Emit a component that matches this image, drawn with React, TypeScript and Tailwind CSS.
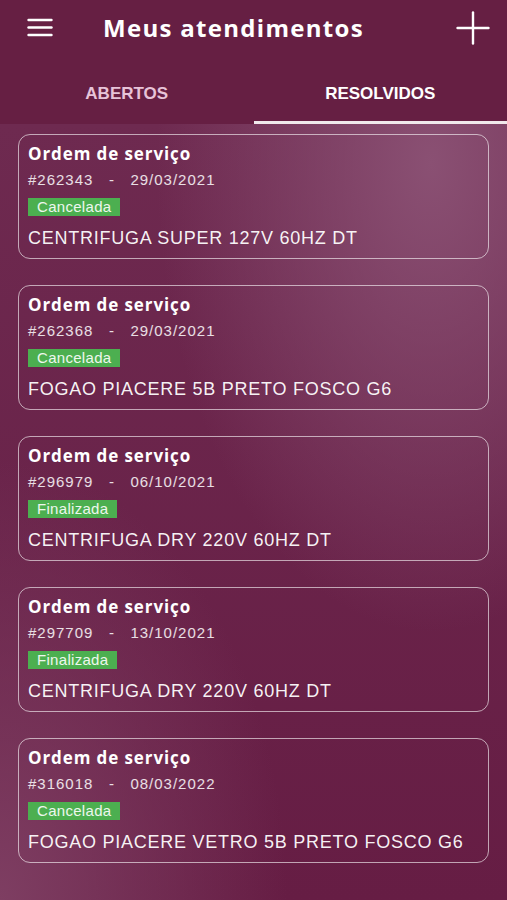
type Order = {
  id: string;
  date: string;
  status: 'Cancelada' | 'Finalizada';
  product: string;
};

const orders: Order[] = [
  { id: '262343', date: '29/03/2021', status: 'Cancelada', product: 'CENTRIFUGA SUPER 127V 60HZ DT' },
  { id: '262368', date: '29/03/2021', status: 'Cancelada', product: 'FOGAO PIACERE 5B PRETO FOSCO G6' },
  { id: '296979', date: '06/10/2021', status: 'Finalizada', product: 'CENTRIFUGA DRY 220V 60HZ DT' },
  { id: '297709', date: '13/10/2021', status: 'Finalizada', product: 'CENTRIFUGA DRY 220V 60HZ DT' },
  { id: '316018', date: '08/03/2022', status: 'Cancelada', product: 'FOGAO PIACERE VETRO 5B PRETO FOSCO G6' },
];

const OrderCard = ({ order }: { order: Order }) => (
  <div className="h-[125px] rounded-[12px] border-[1.5px] border-white/60 px-[9px] pt-[7px]">
    <h3 className="font-['Open_Sans',sans-serif] text-[17px] font-bold leading-[24px] tracking-[0.9px] text-white">
      Ordem de serviço
    </h3>
    <p className="mt-[4px] whitespace-pre font-['Liberation_Sans',Arial,sans-serif] text-[15px] leading-[20px] tracking-[1px] text-white/85">
      #{order.id}   -   {order.date}
    </p>
    <div className="mt-[8px] w-fit bg-[#4caf50] px-[9px] font-['Liberation_Sans',Arial,sans-serif] text-[15px] leading-[18px] tracking-[0.3px] text-white/90">
      {order.status}
    </div>
    <p className="mt-[11px] font-['Liberation_Sans',Arial,sans-serif] text-[18px] leading-[22px] tracking-[0.75px] text-white/95">
      {order.product}
    </p>
  </div>
);

export default function App() {
  return (
    <div className="flex h-[900px] w-[507px] flex-col overflow-hidden bg-[#681f45]">
      <header className="flex h-[56px] shrink-0 items-center bg-[#661f43] pl-[27px] pr-[17px]">
        <svg width="26" height="20" viewBox="0 0 26 20" className="text-white">
          <g stroke="currentColor" strokeWidth="2.4" strokeLinecap="round">
            <line x1="1.5" y1="2" x2="24.5" y2="2" />
            <line x1="1.5" y1="9.5" x2="24.5" y2="9.5" />
            <line x1="1.5" y1="17" x2="24.5" y2="17" />
          </g>
        </svg>
        <h1 className="ml-[50px] flex-1 font-['Open_Sans',sans-serif] text-[24px] font-bold tracking-[1.3px] text-white">
          Meus atendimentos
        </h1>
        <svg width="34" height="34" viewBox="0 0 34 34" className="text-white">
          <g stroke="currentColor" strokeWidth="2.4" strokeLinecap="round">
            <line x1="17" y1="1.5" x2="17" y2="32.5" />
            <line x1="1.5" y1="17" x2="32.5" y2="17" />
          </g>
        </svg>
      </header>

      <nav className="flex h-[68px] shrink-0 bg-[#661f43] font-['Liberation_Sans',Arial,sans-serif] text-[17px] font-semibold">
        <div className="flex flex-1 items-center justify-center pt-[7px] text-[#e7c3d8]">ABERTOS</div>
        <div className="flex flex-1 items-center justify-center border-b-[3px] border-white/90 pt-[10px] text-white">
          RESOLVIDOS
        </div>
      </nav>

      <main className="flex-1 bg-[radial-gradient(ellipse_at_85%_5%,#8a5073_0%,transparent_45%),radial-gradient(ellipse_at_0%_100%,#7e3e62_0%,transparent_40%),linear-gradient(180deg,#6e2a50,#661d44)]">
        <div className="flex flex-col gap-[26px] px-[18px] pt-[10px]">
          {orders.map((order) => (
            <OrderCard key={order.id} order={order} />
          ))}
        </div>
      </main>
    </div>
  );
}
